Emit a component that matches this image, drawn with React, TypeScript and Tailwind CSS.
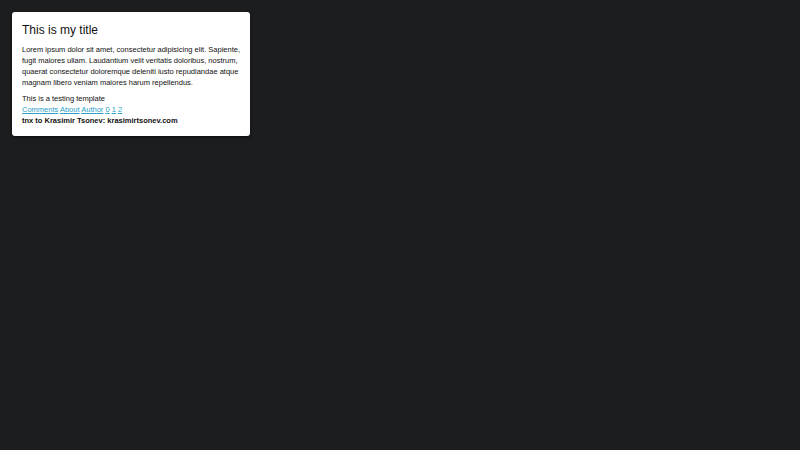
import React from "react";

export default function App() {
  return (
    <div className="min-h-screen w-full bg-[#1c1d1f] p-3 font-['Liberation_Sans',Arial,sans-serif]">
      <div className="w-[238px] rounded-[3px] bg-white pb-[10px] pl-[10px] pr-[6px] pt-[10px] text-[#111] shadow-[0_1px_3px_rgba(0,0,0,0.6)]">
        <h1 className="text-[12px] leading-[17px]">This is my title</h1>
        <p className="mt-[5px] text-[7.5px] leading-[11px]">
          Lorem ipsum dolor sit amet, consectetur adipisicing elit. Sapiente, fugit maiores ullam. Laudantium velit
          veritatis doloribus, nostrum, quaerat consectetur doloremque deleniti iusto repudiandae atque magnam libero
          veniam maiores harum repellendus.
        </p>
        <p className="mt-[5px] text-[7.5px] leading-[11px]">This is a testing template</p>
        <nav className="text-[7.5px] leading-[11px] text-[#2ba0c6]">
          <a href="#" className="underline">Comments</a> <a href="#" className="underline">About</a>{" "}
          <a href="#" className="underline">Author</a> <a href="#" className="underline">0</a>{" "}
          <a href="#" className="underline">1</a> <a href="#" className="underline">2</a>
        </nav>
        <p className="text-[7.5px] font-bold leading-[11px]">tnx to Krasimir Tsonev: krasimirtsonev.com</p>
      </div>
    </div>
  );
}
